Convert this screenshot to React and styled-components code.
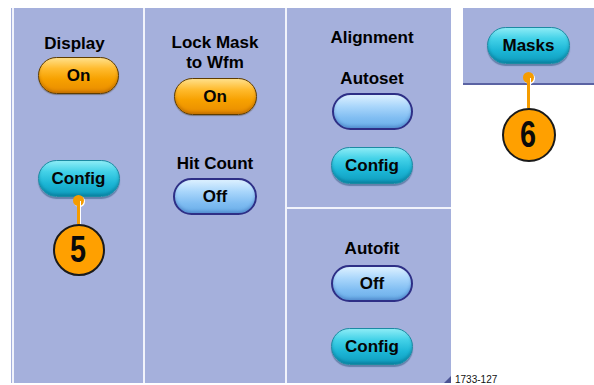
import { createGlobalStyle, styled, css } from "styled-components";

const GlobalStyle = createGlobalStyle`
    html, body {
        margin: 0;
        background: #ffffff;
    }
    body {
        font-family: "Liberation Sans", Arial, sans-serif;
        color: #000;
    }
`

const PANEL_BLUE = "#a5b0dc";

const Page = styled.div`
    display: flex;
    width: 594px;
    height: 385px;
    padding: 8px 0 0 11px;
    box-sizing: border-box;
    overflow: hidden;
`

const Panel = styled.div`
    position: relative;
    display: grid;
    grid-template-columns: 129px 140px 164px;
    column-gap: 2px;
    width: 440px;
    height: 375px;
    box-sizing: border-box;
    padding-left: 2px;
    border-left: 1px solid ${PANEL_BLUE};
    background: #f1f3fb;
    &::after {
        content: "";
        position: absolute;
        right: 0;
        bottom: 0;
        border-style: solid;
        border-width: 0 0 7px 7px;
        border-color: transparent transparent #4b5393 transparent;
    }
`

const Column = styled.div`
    display: flex;
    flex-direction: column;
    align-items: center;
    background: ${PANEL_BLUE};
    padding-top: ${props => props.pad_top || "0px"};
    padding-left: ${props => props.pad_left || "0px"};
    box-sizing: border-box;
`

const SplitColumn = styled.div`
    display: grid;
    grid-template-rows: 199px 1fr;
    row-gap: 2px;
`

const Label = styled.div`
    font-size: 17px;
    font-weight: 700;
    line-height: 20px;
    text-align: center;
    margin-top: ${props => props.mt || "0px"};
    margin-right: ${props => props.shift || "0px"};
    white-space: nowrap;
`

const orange = css`
    border: 1.5px solid #5e3c00;
    background: linear-gradient(to bottom, #ffe08a 0%, #ffbb2e 30%, #f7a100 60%, #e88c00 100%);
    box-shadow: inset 0 -2px 3px rgba(150, 80, 0, 0.45), 0 1px 1px rgba(60, 40, 0, 0.4);
`

const blue = css`
    border: 2px solid #2e2f86;
    background: linear-gradient(to bottom, #dcf0ff 0%, #a9d6fb 35%, #80bdf2 70%, #6aaee8 100%);
    box-shadow: inset 0 -2px 3px rgba(40, 80, 160, 0.35);
`

const teal = css`
    border: 1px solid #1c8aa2;
    background: linear-gradient(to bottom, #8cecf6 0%, #44d2e8 30%, #1cb6d6 65%, #0f9cbd 100%);
    box-shadow: inset 0 -2px 3px rgba(0, 90, 120, 0.4), 0 2px 1px rgba(20, 70, 110, 0.45);
`

const ButtonWrap = styled.div`
    position: relative;
    margin-top: ${props => props.mt || "0px"};
`

const Pill = styled.div`
    display: flex;
    align-items: center;
    justify-content: center;
    width: ${props => props.width || "82px"};
    height: 37px;
    box-sizing: border-box;
    border-radius: 19px;
    font-size: 17px;
    font-weight: 700;
    color: #050505;
    ${props => props.kind === "orange" && orange}
    ${props => props.kind === "blue" && blue}
    ${props => props.kind === "teal" && teal}
`

const CalloutBox = styled.div`
    position: absolute;
    left: 50%;
    top: calc(100% + ${props => props.offset});
    transform: translateX(-50%);
    display: flex;
    flex-direction: column;
    align-items: center;
    z-index: 2;
`

const Dot = styled.div`
    width: 11px;
    height: 11px;
    border-radius: 50%;
    background: #f59c00;
    box-shadow: 1px 1px 0 #ffffff;
`

const Stem = styled.div`
    width: 3px;
    height: ${props => props.length};
    margin-top: -5px;
    background: #f59c00;
    box-shadow: 1px 0 0 #ffffff;
`

const Bubble = styled.div`
    display: flex;
    align-items: center;
    justify-content: center;
    width: ${props => props.size};
    height: ${props => props.size};
    box-sizing: border-box;
    border-radius: 50%;
    border: 2px solid #1a1a1a;
    background: #ffa000;
    span {
        display: inline-block;
        font-size: 36px;
        font-weight: 700;
        line-height: 1;
        transform: scaleX(0.8);
        color: #0a0a0a;
    }
`

const Callout = ({ number, offset, length, size }) => (
    <CalloutBox offset={offset}>
        <Dot />
        <Stem length={length} />
        <Bubble size={size}><span>{number}</span></Bubble>
    </CalloutBox>
)

const Button = ({ title, kind, width, mt, children }) => (
    <ButtonWrap mt={mt}>
        <Pill kind={kind} width={width}>{title}</Pill>
        {children}
    </ButtonWrap>
)

const RightColumn = styled.div`
    display: flex;
    flex-direction: column;
    width: 143px;
    height: 377px;
`

const MaskPanel = styled.div`
    display: flex;
    justify-content: center;
    align-items: flex-start;
    margin-left: 12px;
    height: 77px;
    padding-top: 19px;
    box-sizing: border-box;
    background: ${PANEL_BLUE};
    border-bottom: 2px solid #5b63a3;
    position: relative;
    z-index: 1;
`

const FigureId = styled.div`
    margin-top: auto;
    margin-left: 4px;
    font-size: 10px;
    line-height: 11px;
    color: #111;
`

export default function App() {
    return (
        <>
            <GlobalStyle />
            <Page>
                <Panel>
                    <Column pad_top="26px">
                        <Label shift="8px">Display</Label>
                        <Button title="On" kind="orange" width="81px" mt="3px" />
                        <Button title="Config" kind="teal" mt="66px">
                            <Callout number="5" offset="-2px" length="23px" size="52px" />
                        </Button>
                    </Column>
                    <Column pad_top="25px">
                        <Label>Lock Mask<br />to Wfm</Label>
                        <Button title="On" kind="orange" width="83px" mt="5px" />
                        <Label mt="39px">Hit Count</Label>
                        <Button title="Off" kind="blue" width="84px" mt="4px" />
                    </Column>
                    <SplitColumn>
                        <Column pad_top="20px" pad_left="6px">
                            <Label>Alignment</Label>
                            <Label mt="21px">Autoset</Label>
                            <Button kind="blue" width="81px" mt="4px" />
                            <Button title="Config" kind="teal" mt="17px" />
                        </Column>
                        <Column pad_top="30px" pad_left="6px">
                            <Label>Autofit</Label>
                            <Button title="Off" kind="blue" mt="6px" />
                            <Button title="Config" kind="teal" mt="26px" />
                        </Column>
                    </SplitColumn>
                </Panel>
                <RightColumn>
                    <MaskPanel>
                        <Button title="Masks" kind="teal" width="83px">
                            <Callout number="6" offset="8px" length="30px" size="54px" />
                        </Button>
                    </MaskPanel>
                    <FigureId>1733-127</FigureId>
                </RightColumn>
            </Page>
        </>
    )
}
